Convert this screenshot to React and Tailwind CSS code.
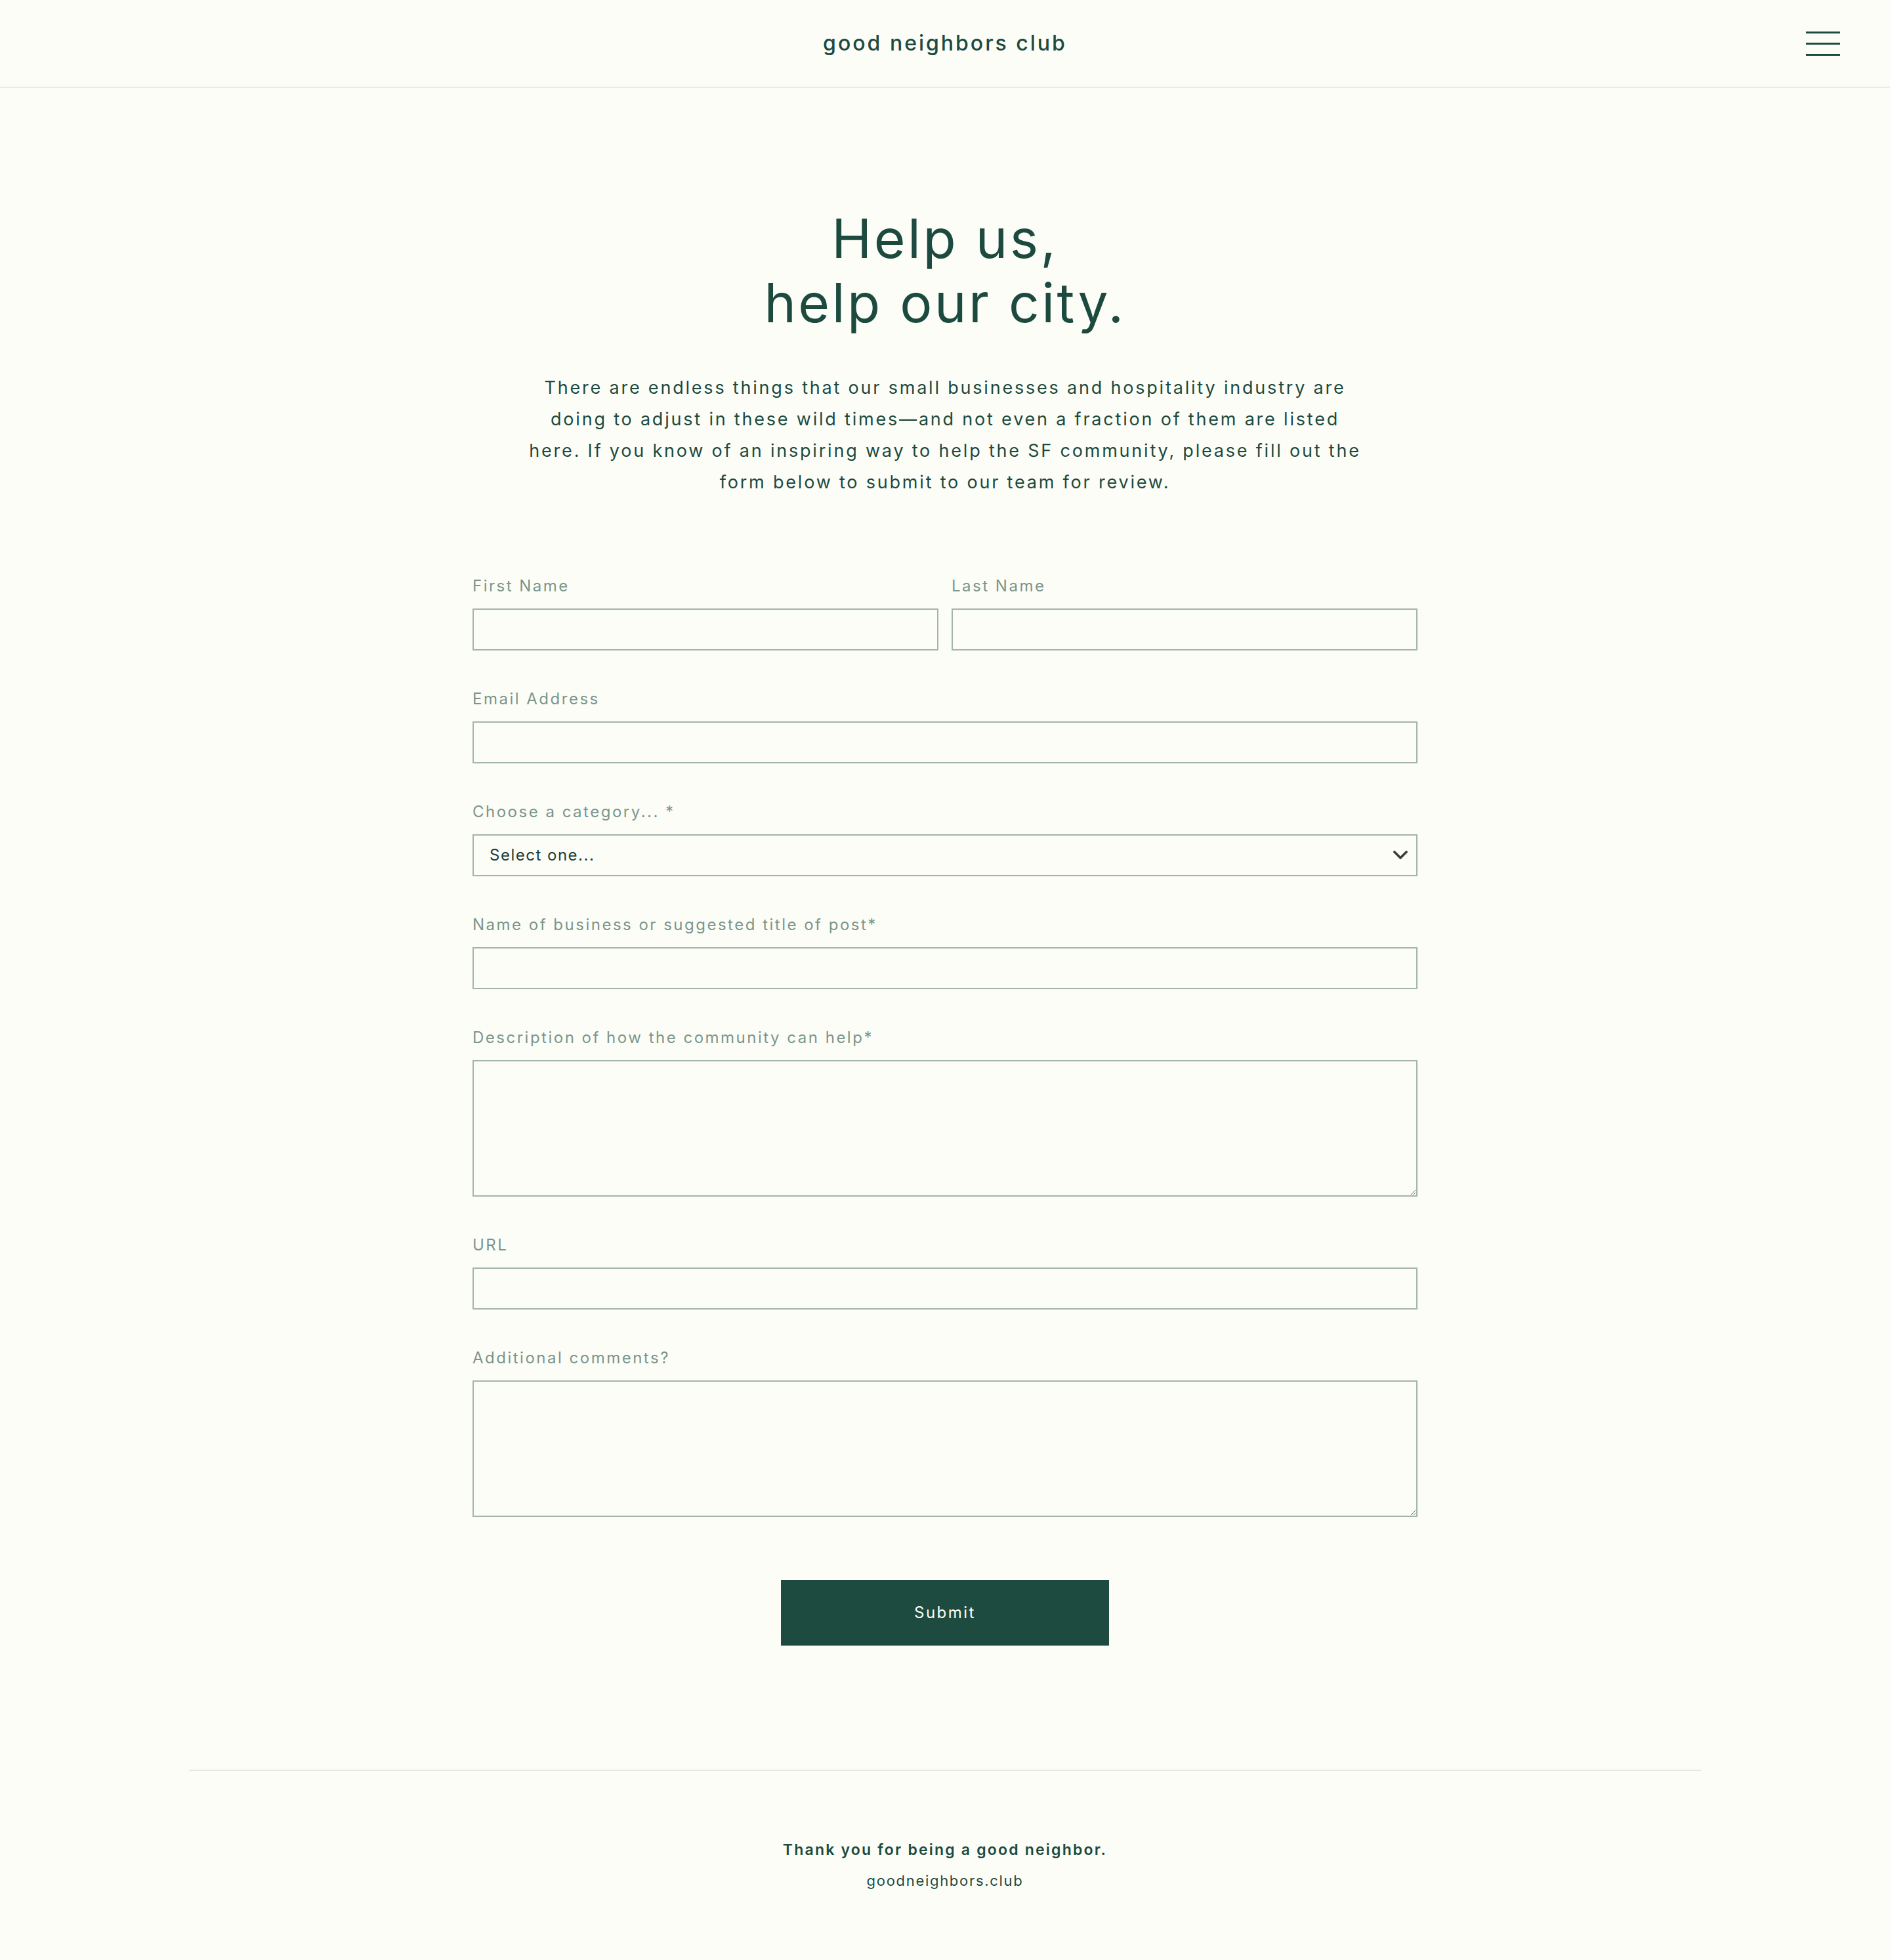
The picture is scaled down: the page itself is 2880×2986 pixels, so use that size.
import React from "react";

const labelCls =
  "block mb-[16px] text-[24px] leading-[36px] tracking-[2.5px] text-[#7a968a]";
const boxCls =
  "block w-full h-[64px] border-2 border-[#a3b4ad] bg-transparent px-[24px] text-[24px] text-[#1c3d35] outline-none";
const areaCls =
  "block w-full h-[208px] border-2 border-[#a3b4ad] bg-transparent px-[24px] py-[16px] text-[24px] text-[#1c3d35] outline-none";

const Field = ({ label, children }) => (
  <div className="mb-[56px]">
    <label className={labelCls}>{label}</label>
    {children}
  </div>
);

const App = () => {
  return (
    <div
      className="min-h-screen bg-[#fdfdf8] text-[#1c4a3e]"
      style={{ fontFamily: "Inter, 'Noto Sans', sans-serif" }}
    >
      {/* top bar */}
      <header className="grid grid-cols-3 items-center h-[134px] border-b-2 border-[#e9ebe6]">
        <div />
        <div className="text-center text-[32px] font-medium tracking-[3px]">
          good neighbors club
        </div>
        <div className="flex justify-end pr-[76px]">
          <button className="flex flex-col gap-[14px] w-[52px]">
            <span className="block h-[3px] w-full bg-[#1c4a3e]" />
            <span className="block h-[3px] w-full bg-[#1c4a3e]" />
            <span className="block h-[3px] w-full bg-[#1c4a3e]" />
          </button>
        </div>
      </header>

      <main className="pt-[181px]">
        <h1 className="text-center text-[82px] leading-[98px] font-normal tracking-[3.5px]">
          Help us,
          <br />
          help our city.
        </h1>
        <p className="mt-[56px] text-center text-[27px] leading-[48px] tracking-[2.8px]">
          There are endless things that our small businesses and hospitality industry are
          <br />
          doing to adjust in these wild times—and not even a fraction of them are listed
          <br />
          here. If you know of an inspiring way to help the SF community, please fill out the
          <br />
          form below to submit to our team for review.
        </p>

        <form className="w-[1440px] mx-auto mt-[116px]">
          <div className="grid grid-cols-2 gap-x-[20px] mb-[56px]">
            <div>
              <label className={labelCls}>First Name</label>
              <input type="text" className={boxCls} />
            </div>
            <div>
              <label className={labelCls}>Last Name</label>
              <input type="text" className={boxCls} />
            </div>
          </div>

          <Field label="Email Address">
            <input type="email" className={boxCls} />
          </Field>

          <Field label="Choose a category... *">
            <div className="relative">
              <select
                className={boxCls + " appearance-none tracking-[1.5px]"}
                defaultValue=""
              >
                <option value="">Select one...</option>
                <option>Restaurants</option>
                <option>Shops</option>
                <option>Nonprofits</option>
              </select>
              <svg
                className="absolute right-[15px] top-[25px] w-[22px] h-[13px] pointer-events-none"
                viewBox="0 0 22 13"
                fill="none"
              >
                <path
                  d="M2 2l9 9 9-9"
                  stroke="#3a3a3a"
                  strokeWidth="3.5"
                  strokeLinecap="square"
                />
              </svg>
            </div>
          </Field>

          <Field label="Name of business or suggested title of post*">
            <input type="text" className={boxCls} />
          </Field>

          <Field label="Description of how the community can help*">
            <textarea className={areaCls} />
          </Field>

          <Field label="URL">
            <input type="url" className={boxCls} />
          </Field>

          <div>
            <label className={labelCls}>Additional comments?</label>
            <textarea className={areaCls} />
          </div>

          <div className="flex justify-center mt-[96px]">
            <button
              type="button"
              className="w-[500px] h-[100px] bg-[#1e4b40] text-[#fdfdf8] text-[24px] tracking-[2.5px]"
            >
              Submit
            </button>
          </div>
        </form>
      </main>

      <footer className="w-[2304px] mx-auto mt-[189px] border-t-2 border-[#e6e8e3] pt-[104px] pb-[104px] text-center">
        <p className="text-[23px] leading-[32px] font-semibold tracking-[2.2px]">
          Thank you for being a good neighbor.
        </p>
        <p className="mt-[15px] text-[22px] leading-[32px] tracking-[1.7px]">
          goodneighbors.club
        </p>
      </footer>
    </div>
  );
};

export default App;
